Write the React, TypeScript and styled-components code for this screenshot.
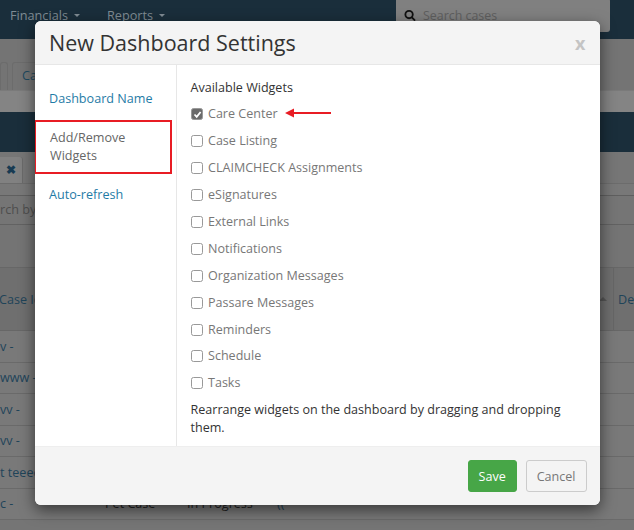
import React from "react";
import styled, { createGlobalStyle } from "styled-components";

const Global = createGlobalStyle`
  html, body { margin: 0; padding: 0; width: 634px; height: 530px; overflow: hidden; background: #7a7a7a; }
  * { box-sizing: border-box; }
  body { font-family: "Open Sans", "Liberation Sans", sans-serif; }
`;

const Page = styled.div`
  position: relative;
  width: 634px;
  height: 530px;
  overflow: hidden;
  background: #757575;
`;

const Nav = styled.div`
  height: 39px;
  background: #1a2e3b;
  display: flex;
  align-items: flex-start;
  padding-left: 10px;
  gap: 27px;
  color: #7f8b93;
  font-size: 12.7px;
  line-height: 31px;
`;
const NavItem = styled.span`
  display: flex;
  align-items: center;
  gap: 6px;
  &::after { content: ""; border: 3px solid transparent; border-top-color: #7f8b93; margin-top: 3px; }
`;
const SearchBox = styled.div`
  margin-left: 204px;
  margin-top: -2px;
  width: 214px;
  height: 34px;
  border-radius: 3px;
  background: #808080;
  display: flex;
  align-items: center;
  padding-left: 8px;
  gap: 7px;
  font-size: 12.4px;
  color: #5f5f5f;
`;
const TabStrip = styled.div`
  height: 51px;
  background: #747474;
  display: flex;
  align-items: flex-end;
  gap: 4px;
  color: #1f4a60;
  font-size: 12.6px;
`;
const Tab = styled.div<{ $w: number }>`
  height: 28px;
  width: ${(p) => p.$w}px;
  padding-top: 4px;
  text-indent: 9px;
  border: 1px solid #6c6c6c;
  border-bottom: none;
  border-radius: 3px 3px 0 0;
`;
const Strip = styled.div`
  height: 22px;
  background: #848484;
  border-top: 1px solid #7a7a7a;
`;
const Band = styled.div`
  height: 40px;
  background: #1a2e3b;
`;
const SubTabs = styled.div`
  height: 32px;
  padding-top: 5px;
  background: #767676;
  border-bottom: 1px solid #6c6c6c;
`;
const SubTab = styled.div`
  width: 23px;
  height: 26px;
  background: #818181;
  border-right: 1px solid #6a6a6a;
  border-radius: 0 3px 0 0;
  color: #173a52;
  font-size: 12px;
  font-weight: 700;
  padding: 4px 0 0 6px;
`;
const Divider = styled.div`
  height: 12px;
  background: #787878;
  border-bottom: 1px solid #5f5f5f;
`;
const Filter = styled.div`
  height: 29px;
  padding-top: 5px;
  color: #4e4e4e;
  font-size: 12.6px;
  border-bottom: 1px solid #626262;
`;
const Gap = styled.div`
  height: 42px;
  background: #747474;
`;
const Head = styled.div`
  height: 64px;
  background: #6f6f6f;
  border-top: 1px solid #676767;
  border-bottom: 1px solid #676767;
  color: #1f4459;
  font-size: 12.6px;
  display: flex;
  align-items: center;
  justify-content: space-between;
`;
const HeadName = styled.span`
  margin-left: -1px;
`;
const HeadEnd = styled.div`
  height: 100%;
  display: flex;
  align-items: center;
`;
const SortCaret = styled.span`
  border: 4px solid transparent;
  border-bottom-color: #555;
  border-top: none;
  margin-right: 6px;
`;
const HeadCell = styled.span`
  width: 21px;
  height: 100%;
  border-left: 1px solid #666;
  padding-left: 4px;
  display: flex;
  align-items: center;
  white-space: nowrap;
`;
const Row = styled.div`
  height: 31.5px;
  border-bottom: 1px solid #6a6a6a;
  display: grid;
  grid-template-columns: 105px 82px 90px auto;
  align-items: center;
  font-size: 12.6px;
  color: #1f4459;
  background: #797979;
  overflow: hidden;
`;
const Plain = styled.span`
  color: #222;
`;
const Code = styled.span`
  color: #1f4459;
`;

const Modal = styled.div`
  position: absolute;
  left: 35px;
  top: 21px;
  width: 564.5px;
  height: 484px;
  border-radius: 6px;
  background: #fff;
  box-shadow: 0 5px 15px rgba(0, 0, 0, 0.55);
  display: flex;
  flex-direction: column;
  overflow: hidden;
`;
const ModalHeader = styled.div`
  height: 44px;
  background: #f4f4f4;
  border-bottom: 1px solid #e7e7e7;
  display: flex;
  align-items: center;
  justify-content: space-between;
  padding: 0 14px;
`;
const Title = styled.h4`
  margin: 0;
  font-size: 21.5px;
  font-weight: 400;
  color: #333;
`;
const Close = styled.span`
  font-size: 18px;
  font-weight: 700;
  color: #c4c4c4;
  line-height: 1;
`;
const Body = styled.div`
  flex: 1;
  display: flex;
  min-height: 0;
`;
const Side = styled.div`
  width: 142px;
  border-right: 1px solid #e7e7e7;
  padding-top: 15px;
  display: flex;
  flex-direction: column;
  font-size: 12.6px;
  line-height: 18px;
`;
const SideLink = styled.div`
  padding: 10px 14px;
  color: #1f7ba6;
`;
const ActiveLink = styled.div`
  padding: 7px 10px 7px 14px;
  margin: 2px 0;
  width: 137px;
  color: #666;
  border: 2px solid #e81c24;
  border-left-width: 1px;
`;
const Main = styled.div`
  flex: 1;
  padding: 14px 14px 0 13.5px;
  font-size: 12.55px;
  color: #333;
  line-height: 18px;
`;
const Heading = styled.div`
  margin-bottom: 4px;
`;
const List = styled.div`
  display: flex;
  flex-direction: column;
  padding-left: 0.5px;
`;
const Item = styled.label`
  position: relative;
  height: 26.9px;
  display: flex;
  align-items: center;
  gap: 5px;
  color: #777;
`;
const Box = styled.span<{ $checked?: boolean }>`
  width: 12px;
  height: 12px;
  border-radius: 2.5px;
  border: 1.2px solid #999;
  background: ${(p) => (p.$checked ? "#6b6b6b" : "#fff")};
  display: flex;
  align-items: center;
  justify-content: center;
`;
const Arrow = styled.svg`
  position: absolute;
  left: 94px;
  top: 7px;
`;
const Note = styled.p`
  margin: 4px 0 0;
`;
const ModalFooter = styled.div`
  height: 59px;
  background: #f4f4f4;
  border-top: 1px solid #eee;
  display: flex;
  justify-content: flex-end;
  align-items: center;
  gap: 9px;
  padding: 0 13px;
`;
const Button = styled.button<{ $primary?: boolean }>`
  height: 32px;
  padding: 0 10px;
  font-family: inherit;
  font-size: 12.55px;
  border-radius: 3px;
  color: ${(p) => (p.$primary ? "#fff" : "#777")};
  background: ${(p) => (p.$primary ? "#47a647" : "#f4f4f4")};
  border: 1px solid ${(p) => (p.$primary ? "#47a647" : "#ccc")};
`;

const widgets = [
  "Care Center",
  "Case Listing",
  "CLAIMCHECK Assignments",
  "eSignatures",
  "External Links",
  "Notifications",
  "Organization Messages",
  "Passare Messages",
  "Reminders",
  "Schedule",
  "Tasks",
];
const rows = ["v -", "www -", "vv -", "vv -", "t teeeeeeee"];

export default function App() {
  return (
    <Page>
      <Global />
      <Nav>
        <NavItem>Financials</NavItem>
        <NavItem>Reports</NavItem>
        <SearchBox>
          <svg width="12" height="13" viewBox="0 0 13 13" fill="none" stroke="#111" strokeWidth="2">
            <circle cx="5.5" cy="5.5" r="4" />
            <path d="M8.5 8.5 12 12" />
          </svg>
          Search cases
        </SearchBox>
      </Nav>
      <TabStrip>
        <Tab $w={8} />
        <Tab $w={60}>Ca</Tab>
      </TabStrip>
      <Strip />
      <Band />
      <SubTabs>
        <SubTab>✖</SubTab>
      </SubTabs>
      <Divider />
      <Filter>rch by</Filter>
      <Gap />
      <Head>
        <HeadName>Case Id</HeadName>
        <HeadEnd>
          <SortCaret />
          <HeadCell>De</HeadCell>
        </HeadEnd>
      </Head>
      {rows.map((r, i) => (
        <Row key={i}>{r}</Row>
      ))}
      <Row>
        c -
        <Plain>Pet Case</Plain>
        <Plain>In Progress</Plain>
        <Code>((</Code>
      </Row>
      <Modal>
        <ModalHeader>
          <Title>New Dashboard Settings</Title>
          <Close>x</Close>
        </ModalHeader>
        <Body>
          <Side>
            <SideLink>Dashboard Name</SideLink>
            <ActiveLink>Add/Remove Widgets</ActiveLink>
            <SideLink>Auto-refresh</SideLink>
          </Side>
          <Main>
            <Heading>Available Widgets</Heading>
            <List>
              {widgets.map((w, i) => (
                <Item key={w}>
                  <Box $checked={i === 0}>
                    {i === 0 && (
                      <svg width="9" height="9" viewBox="0 0 9 9" fill="none" stroke="#fff" strokeWidth="1.8">
                        <path d="M1.5 4.5 3.7 6.8 7.6 2" />
                      </svg>
                    )}
                  </Box>
                  {w}
                  {i === 0 && (
                    <Arrow width="46" height="10" viewBox="0 0 46 10">
                      <path d="M0 5 9 .5V4H46V6H9V9.5Z" fill="#e81c24" />
                    </Arrow>
                  )}
                </Item>
              ))}
            </List>
            <Note>Rearrange widgets on the dashboard by dragging and dropping them.</Note>
          </Main>
        </Body>
        <ModalFooter>
          <Button $primary>Save</Button>
          <Button>Cancel</Button>
        </ModalFooter>
      </Modal>
    </Page>
  );
}
